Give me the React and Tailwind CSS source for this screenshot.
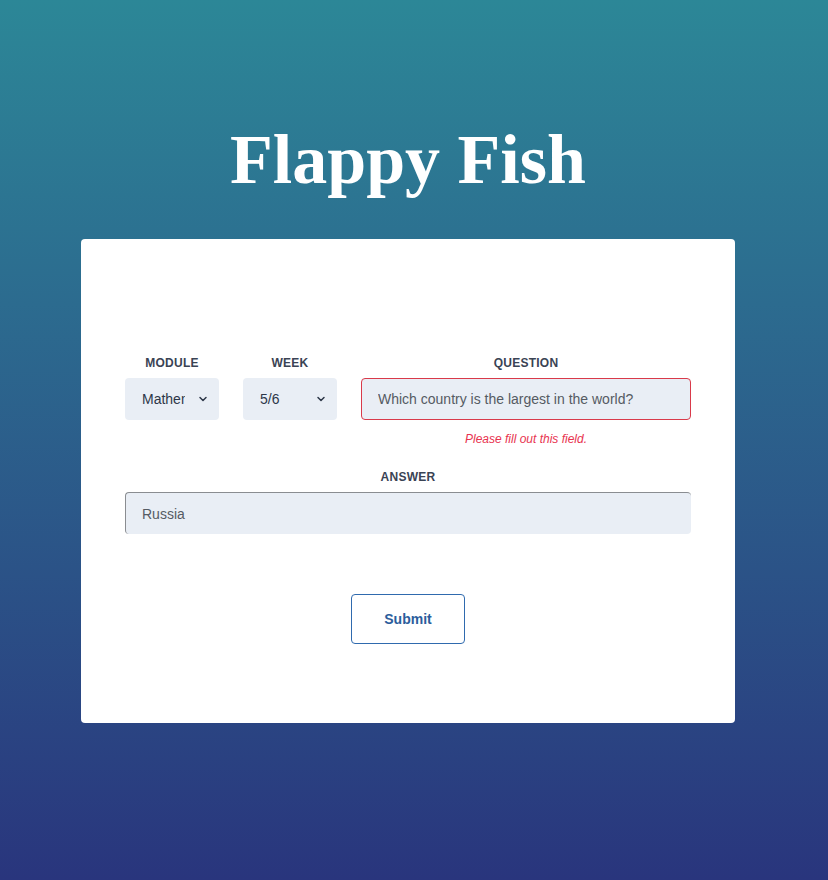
import React from 'react';

function Chevron() {
  return (
    <svg
      className="pointer-events-none absolute right-[11px] top-1/2 -translate-y-1/2"
      width="10"
      height="10"
      viewBox="0 0 10 10"
      fill="none"
    >
      <path d="M2 3.5 L5 6.5 L8 3.5" stroke="#2d3748" strokeWidth="1.5" strokeLinecap="round" strokeLinejoin="round" />
    </svg>
  );
}

function Field({ label, children, className = '' }) {
  return (
    <div className={`flex flex-col ${className}`}>
      <label className="mb-[7px] text-center text-[12px] font-bold uppercase leading-4 tracking-[0.02em] text-[#3a4354]">
        {label}
      </label>
      {children}
    </div>
  );
}

export default function App() {
  return (
    <div
      className="flex min-h-[880px] flex-col items-center bg-gradient-to-b from-[#2c8797] to-[#29357d] pr-[12px] pt-[119px]"
      style={{ fontFamily: '"Liberation Sans", Arial, sans-serif' }}
    >
      <h1
        className="text-[70px] font-bold leading-[82px] text-white"
        style={{ fontFamily: '"Liberation Serif", "Times New Roman", serif' }}
      >
        Flappy Fish
      </h1>

      <form
        className="mt-[38px] w-[654px] rounded-[4px] bg-white px-[44px] pb-[79px] pt-[116px]"
        onSubmit={(e) => e.preventDefault()}
      >
        <div className="flex gap-[24px]">
          <Field label="Module" className="w-[94px]">
            <div className="relative">
              <select
                defaultValue="Mathematics"
                className="h-[42px] w-full appearance-none rounded-[4px] bg-[#e9eef5] pl-[17px] pr-[34px] text-[14px] text-[#2d3748] outline-none"
              >
                <option>Mathematics</option>
                <option>Physics</option>
              </select>
              <Chevron />
            </div>
          </Field>
          <Field label="Week" className="w-[94px]">
            <div className="relative">
              <select
                defaultValue="5/6"
                className="h-[42px] w-full appearance-none rounded-[4px] bg-[#e9eef5] pl-[17px] pr-[34px] text-[14px] text-[#2d3748] outline-none"
              >
                <option>1/2</option>
                <option>3/4</option>
                <option>5/6</option>
              </select>
              <Chevron />
            </div>
          </Field>
          <Field label="Question" className="flex-1">
            <input
              defaultValue="Which country is the largest in the world?"
              className="h-[42px] w-full rounded-[4px] border border-[#d93a4a] bg-[#e9eef5] px-[16px] text-[14px] text-[#555b63] outline-none"
            />
            <p className="mt-[11px] text-center text-[12px] italic leading-4 text-[#e8334f]">
              Please fill out this field.
            </p>
          </Field>
        </div>

        <div className="mt-[22px]">
          <Field label="Answer">
            <input
              defaultValue="Russia"
              className="h-[42px] w-full rounded-[4px] border-l border-t border-[#8a8d91] bg-[#e9eef5] px-[16px] text-[14px] text-[#555b63] outline-none"
            />
          </Field>
        </div>

        <div className="mt-[60px] flex justify-center">
          <button
            type="submit"
            className="h-[50px] w-[114px] rounded-[4px] border border-[#2f6aae] bg-white text-[14px] font-bold text-[#2b5d9c]"
          >
            Submit
          </button>
        </div>
      </form>
    </div>
  );
}
